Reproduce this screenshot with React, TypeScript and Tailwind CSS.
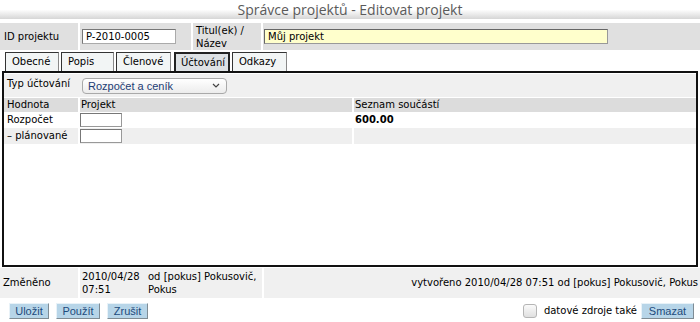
const cell = "bg-[#e0e0e0]";

function Tab({ label, active }: { label: string; active?: boolean }) {
  return (
    <div
      className={
        active
          ? "h-[19px] px-[5px] flex items-center border-2 border-b-0 border-[#222] bg-[#dde1e4]"
          : "h-[19px] px-[6px] flex items-center border border-b-0 border-[#333] border-r-[#888] bg-[#f2f5f5]"
      }
    >
      {label}
    </div>
  );
}

function Btn({ label, w }: { label: string; w: string }) {
  return (
    <div
      className={`${w} h-[16px] flex items-center justify-center bg-[#b7d5e8] border border-[#e8f2f8] border-r-[#7f8c94] border-b-[#7f8c94] font-['Liberation_Sans'] text-[11px] text-[#1d4b7c]`}
    >
      {label}
    </div>
  );
}

export default function App() {
  return (
    <div className="w-[700px] h-[322px] bg-white font-['DejaVu_Sans',sans-serif] text-[10px] leading-[12px] text-black overflow-hidden">
      {/* title */}
      <div className="h-[19px] flex items-center justify-center bg-gradient-to-b from-white via-white to-[#d6d6d6] font-['Open_Sans',sans-serif] text-[14px] text-[#5a5a5a]">
        Správce projektů - Editovat projekt
      </div>

      {/* id / title row */}
      <div className="mt-[4px] flex gap-[2px] h-[27px]">
        <div className={`${cell} w-[78px] flex items-center pl-[4px]`}>ID projektu</div>
        <div className={`${cell} w-[111px] flex items-center pl-[2px]`}>
          <div className="w-[94px] h-[15px] bg-white border border-[#aaa] border-t-[#777] border-l-[#777] flex items-center pl-[3px]">
            P-2010-0005
          </div>
        </div>
        <div className={`${cell} w-[68px] flex flex-col justify-center pl-[3px] leading-[13px]`}>
          <span>Titul(ek) /</span>
          <span>Název</span>
        </div>
        <div className={`${cell} flex-1 flex items-center pl-[1px]`}>
          <div className="w-[344px] h-[15px] bg-[#ffffcc] border border-[#999] border-t-[#666] border-l-[#666] flex items-center pl-[3px]">
            Můj projekt
          </div>
        </div>
      </div>

      {/* tabs */}
      <div className="mt-[2px] flex gap-[2px] pl-[5px] h-[19px] items-end">
        <div className="w-[54px]"><Tab label="Obecné" /></div>
        <div className="w-[53px]"><Tab label="Popis" /></div>
        <div className="w-[55px]"><Tab label="Členové" /></div>
        <div className="w-[56px] ml-[1px]"><Tab label="Účtování" active /></div>
        <div className="w-[55px]"><Tab label="Odkazy" /></div>
      </div>

      {/* panel */}
      <div className="mx-[2px] h-[196px] border-2 border-[#111]">
        <div className="flex gap-[2px] bg-[#f0f0f0] h-[23px] mt-[1px] items-center">
          <div className="w-[74px] pl-[3px] self-start pt-[4px]">Typ účtování</div>
          <div className="ml-[2px] w-[145px] h-[16px] rounded-[4px] border border-[#a9a9a9] bg-gradient-to-b from-white to-[#ececec] flex items-center justify-between px-[5px] font-['Liberation_Sans'] text-[11px] text-[#1c3c74]">
            <span>Rozpočet a ceník</span>
            <svg width="8" height="5" viewBox="0 0 8 5" className="mr-[1px]">
              <path d="M1 1l3 3 3-3" fill="none" stroke="#444" strokeWidth="1.2" />
            </svg>
          </div>
        </div>
        <div className="mt-[1px] flex gap-[2px] h-[14px]">
          <div className="w-[74px] bg-[#dcdcdc] pl-[3px] flex items-center">Hodnota</div>
          <div className="w-[272px] bg-[#dcdcdc] pl-[1px] flex items-center">Projekt</div>
          <div className="flex-1 bg-[#dcdcdc] pl-[1px] flex items-center">Seznam součástí</div>
        </div>
        <div className="flex gap-[2px] h-[16px] bg-white">
          <div className="w-[74px] pl-[3px] flex items-center">Rozpočet</div>
          <div className="w-[272px] flex items-center">
            <div className="w-[42px] h-[14px] border border-[#999] border-t-[#777] border-l-[#777] bg-white" />
          </div>
          <div className="flex-1 pl-[1px] flex items-center font-bold">600.00</div>
        </div>
        <div className="flex gap-[2px] h-[16px]">
          <div className="w-[74px] pl-[3px] flex items-center bg-[#efefef]">– plánované</div>
          <div className="w-[272px] flex items-center bg-[#efefef]">
            <div className="w-[42px] h-[14px] border border-[#999] border-t-[#777] border-l-[#777] bg-white" />
          </div>
          <div className="flex-1 bg-[#efefef]" />
        </div>
      </div>

      {/* footer info */}
      <div className="mt-[1px] flex gap-[2px] h-[30px]">
        <div className="w-[78px] bg-[#f0f0f0] flex items-center pl-[3px]">Změněno</div>
        <div className="w-[182px] bg-[#f0f0f0] flex items-center">
          <div className="w-[68px] pl-[2px] leading-[13px]">2010/04/28<br />07:51</div>
          <div className="leading-[13px]">od [pokus] Pokusovič,<br />Pokus</div>
        </div>
        <div className="flex-1 bg-[#f0f0f0] flex items-center justify-end pr-[2px]">
          vytvořeno 2010/04/28 07:51 od [pokus] Pokusovič, Pokus
        </div>
      </div>

      {/* buttons */}
      <div className="mt-[4px] flex items-center h-[17px]">
        <div className="flex gap-[7px] pl-[9px]">
          <Btn label="Uložit" w="w-[40px]" />
          <Btn label="Použít" w="w-[44px]" />
          <Btn label="Zrušit" w="w-[41px]" />
        </div>
        <div className="ml-auto flex items-center pr-[6px]">
          <div className="w-[14px] h-[14px] rounded-[3px] border border-[#b5b5b5] bg-gradient-to-b from-[#fafafa] to-[#e0e0e0]" />
          <span className="ml-[7px] mr-[4px]">datové zdroje také</span>
          <Btn label="Smazat" w="w-[53px]" />
        </div>
      </div>
    </div>
  );
}
